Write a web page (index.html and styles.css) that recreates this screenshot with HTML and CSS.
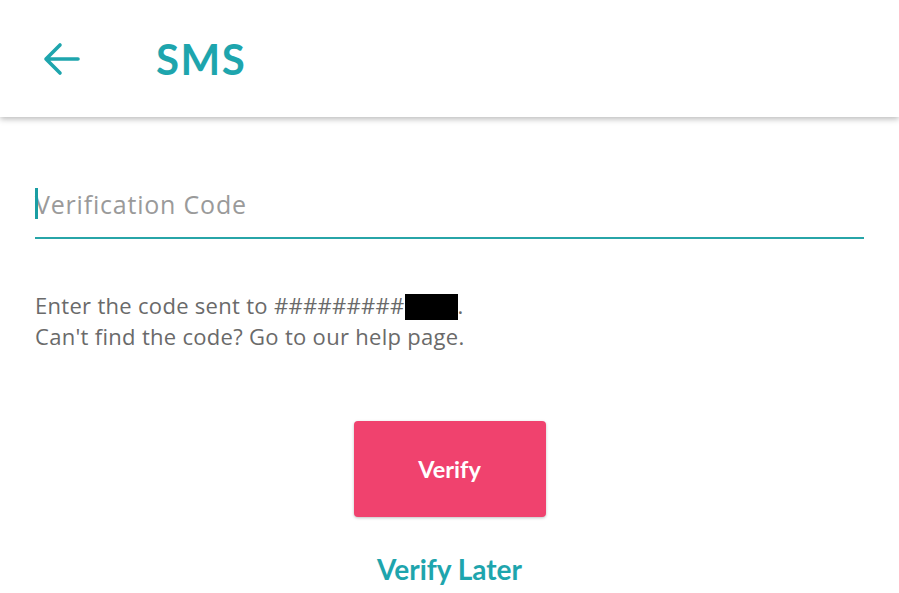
FILE: index.html
```html
<!DOCTYPE html>
<html>
<head>
<meta charset="utf-8">
<link rel="stylesheet" href="styles.css">
</head>
<body>
<header class="appbar">
  <svg class="back" width="40" height="36" viewBox="0 0 40 36">
    <path d="M37 18 H5 M19 4 L5 18 L19 32" fill="none" stroke="#1ea5ad" stroke-width="3.6" stroke-linecap="round" stroke-linejoin="round"/>
  </svg>
  <h1 class="title">SMS</h1>
</header>
<main class="content">
  <div class="field">
    <span class="cursor"></span>
    <span class="placeholder">Verification Code</span>
  </div>
  <p class="info">Enter the code sent to #########<span class="redact"></span>.<br>Can't find the code? Go to our help page.</p>
  <div class="actions">
    <button class="verify">Verify</button>
    <a class="later">Verify Later</a>
  </div>
</main>
</body>
</html>
```

FILE: styles.css
```css
html, body {
  margin: 0;
  padding: 0;
  background: #ffffff;
  font-family: "Open Sans", Lato, sans-serif;
  width: 899px;
  height: 593px;
  overflow: hidden;
}
.appbar {
  height: 117px;
  display: flex;
  align-items: center;
  box-shadow: 0 2px 6px rgba(0,0,0,0.28);
  position: relative;
  z-index: 1;
  background: #fff;
}
.back {
  margin-left: 41px;
  margin-top: 1px;
}
.title {
  margin: 0 0 0 75px;
  font-family: Lato, sans-serif;
  font-size: 42px;
  font-weight: 700;
  color: #1ea5ad;
  letter-spacing: 1.5px;
}
.content {
  padding: 0 35px 0 35px;
}
.field {
  margin-top: 71px;
  height: 49px;
  border-bottom: 2px solid #27a5a8;
  position: relative;
}
.cursor {
  position: absolute;
  left: 0;
  top: 0;
  width: 3px;
  height: 31px;
  background: #1a9ea3;
}
.placeholder {
  display: block;
  font-size: 25px;
  color: #9a9a9a;
  line-height: 32px;
  letter-spacing: 0.8px;
}
.info {
  margin: 51px 0 0 0;
  font-size: 22px;
  line-height: 31px;
  color: #6a6a6a;
  letter-spacing: 0.3px;
}
.redact {
  display: inline-block;
  width: 53px;
  height: 26px;
  background: #000;
  vertical-align: -6px;
}
.actions {
  display: flex;
  flex-direction: column;
  align-items: center;
  margin-top: 69px;
}
.verify {
  width: 192px;
  height: 96px;
  border: none;
  border-radius: 4px;
  background: #f0426e;
  color: #fff;
  font-family: Lato, sans-serif;
  font-size: 23.5px;
  font-weight: 700;
  box-shadow: 0 1px 3px rgba(0,0,0,0.25);
}
.later {
  margin-top: 35px;
  font-family: Lato, sans-serif;
  font-size: 28px;
  font-weight: 700;
  color: #1ea5ad;
}
```
